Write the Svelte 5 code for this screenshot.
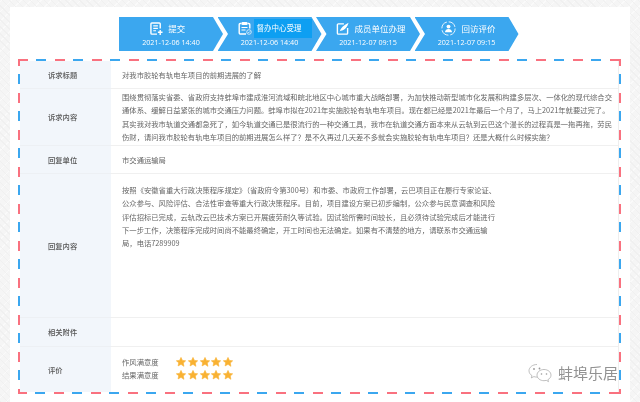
<script>
  const lines1 = [
    "围绕贯彻落实省委、省政府支持蚌埠市建成淮河流域和皖北地区中心城市重大战略部署，为加快推动新型城市化发展和构建多层次、一体化的现代综合交",
    "通体系、缓解日益紧张的城市交通压力问题。蚌埠市拟在2021年实施胶轮有轨电车项目。现在都已经是2021年最后一个月了，马上2021年就要过完了。",
    "其实我对我市轨道交通都急死了，如今轨道交通已是很流行的一种交通工具，我市在轨道交通方面本来从云轨到云巴这个漫长的过程真是一拖再拖，劳民",
    "伤财，请问我市胶轮有轨电车项目的前期进展怎么样了？是不久再过几天差不多就会实施胶轮有轨电车项目？还是大概什么时候实施？",
  ];
  const lines2 = [
    "按照《安徽省重大行政决策程序规定》（省政府令第300号）和市委、市政府工作部署，云巴项目正在履行专家论证、",
    "公众参与、风险评估、合法性审查等重大行政决策程序。目前，项目建设方案已初步编制，公众参与民意调查和风险",
    "评估招标已完成，云轨改云巴技术方案已开展疲劳耐久等试验。因试验所需时间较长，且必须待试验完成后才能进行",
    "下一步工作，决策程序完成时间尚不能最终确定，开工时间也无法确定。如果有不清楚的地方，请联系市交通运输",
    "局，电话7289909",
  ];
  const steps = [
    { title: "提交", date: "2021-12-06 14:40", icon: "doc" },
    { title: "督办中心受理", date: "2021-12-06 14:40", icon: "clip", active: true },
    { title: "成员单位办理", date: "2021-12-07 09:15", icon: "pen" },
    { title: "回访评价", date: "2021-12-07 09:15", icon: "user" },
  ];
  const stars = [0, 1, 2, 3, 4];
</script>

<div class="page">
  <div class="sheet">
    <div class="steps">
      {#each steps as s, i}
        <div class="step" class:first={i === 0}>
          <div class="head {s.icon}">
            <svg class="ico" viewBox="0 0 14 14" fill="none" stroke="#fff">
              {#if s.icon === "doc"}
                <path d="M7.500 13H2a1 1 0 0 1-1-1V2a1 1 0 0 1 1-1h8a1 1 0 0 1 1 1v5" stroke-width="1.500" />
                <path d="M3.500 4.200h5M3.500 6.800h5M3.500 9.400h3" stroke-width="1.300" />
                <path d="M11 8.500v5.500M8.500 11h5" stroke-width="1.500" />
              {:else if s.icon === "clip"}
                <path d="M3.500 2.500H2.200a1 1 0 0 0-1 1V12a1 1 0 0 0 1 1h5.800M9.500 2.500h1.300a1 1 0 0 1 1 1v4" stroke-width="1.400" />
                <rect x="3.500" y="1" width="6" height="3" rx="1" fill="#fff" stroke="none" />
                <path d="M3.500 6.500h6M3.500 9h4" stroke-width="1.200" />
                <circle cx="11" cy="11" r="2.300" stroke-width="0.700" />
                <path d="M9.900 11l.8.8 1.400-1.500" stroke-width="0.700" />
              {:else if s.icon === "pen"}
                <path d="M8.500 2H2.500a1 1 0 0 0-1 1v9a1 1 0 0 0 1 1h9a1 1 0 0 0 1-1V6.500" stroke-width="1.500" />
                <path d="M4 10C5 6.500 8 3.500 13.500 .8 12.500 5.500 9 9 5.200 9.500z" fill="#fff" stroke="none" />
              {:else}
                <circle cx="7" cy="7" r="6.200" stroke-width="0.800" stroke-dasharray="8 1.740" />
                <circle cx="7" cy="5.200" r="1.800" fill="#fff" stroke="none" />
                <path d="M3.600 10.600c.3-2.200 1.700-3.200 3.400-3.200s3.100 1 3.400 3.200z" fill="#fff" stroke="none" />
              {/if}
            </svg>
            <span class="title" class:active={s.active}>{s.title}</span>
          </div>
          <div class="date">{s.date}</div>
        </div>
      {/each}
    </div>

    <div class="frame">
      <div class="table">
        <div class="label">诉求标题</div>
        <div class="val">对我市胶轮有轨电车项目的前期进展的了解</div>

        <div class="label">诉求内容</div>
        <div class="val">
          {#each lines1 as line}<div class="line">{line}</div>{/each}
        </div>

        <div class="label">回复单位</div>
        <div class="val">市交通运输局</div>

        <div class="label">回复内容</div>
        <div class="val top">
          {#each lines2 as line}<div class="line">{line}</div>{/each}
        </div>

        <div class="label">相关附件</div>
        <div class="val"></div>

        <div class="label last">评价</div>
        <div class="val last rates">
          {#each ["作风满意度", "结果满意度"] as name}
            <div class="rate">
              <span class="rate-name">{name}</span>
              <span class="stars">
                {#each stars as n (n)}
                  <svg class="star" viewBox="0 0 24 24"><path d="M12 1l3.400 7.200 7.800 1-5.700 5.400 1.500 7.800L12 17.600l-7 3.800 1.500-7.800L.8 9.200l7.800-1z" fill="#f9b233" stroke="#f9b233" stroke-width="1.500" stroke-linejoin="round" /></svg>
                {/each}
              </span>
            </div>
          {/each}
        </div>
      </div>

      <div class="mark">
        <svg class="wx" viewBox="0 0 24 20" fill="#fff" stroke="#a5a5a5" stroke-width="0.700">
          <path d="M9 1.500C4.600 1.500 1 4.300 1 7.800c0 2 1.200 3.700 3 4.900l-.7 2.200 2.600-1.300c1 .3 2 .5 3.100.5.300 0 .6 0 .9-.1" />
          <path d="M16 6.500c-3.900 0-7 2.500-7 5.600s3.100 5.600 7 5.600c.8 0 1.600-.1 2.300-.3l2.200 1.200-.6-1.900c1.900-1 3.100-2.700 3.100-4.600 0-3.100-3.100-5.600-7-5.600z" />
          <circle cx="6" cy="6" r="0.900" fill="#999" stroke="none" />
          <circle cx="11.500" cy="5.500" r="0.900" fill="#999" stroke="none" />
          <circle cx="13.500" cy="11" r="0.800" fill="#999" stroke="none" />
          <circle cx="18.500" cy="11" r="0.800" fill="#999" stroke="none" />
        </svg>
        <span>蚌埠乐居</span>
      </div>
    </div>
  </div>
</div>

<style>
  :global(body) {
    margin: 0;
    background: #f5f5f5;
  }

  .page {
    width: 640px;
    height: 402px;
    overflow: hidden;
    font-family: "Noto Sans CJK SC", "Noto Sans", sans-serif;
    background-color: #f5f5f5;
    background-image:
      repeating-linear-gradient(45deg, #f0f0f0 0 1px, transparent 1px 5px),
      repeating-linear-gradient(-45deg, #fafafa 0 1px, transparent 1px 7px);
    padding: 7px 10px 0;
    box-sizing: border-box;
    filter: blur(0.3px);
  }

  .sheet {
    background: #fff;
    height: 395px;
    padding-top: 10px;
    box-sizing: border-box;
  }

  .steps {
    display: flex;
    margin-left: 109px;
    height: 34px;
  }

  .step {
    width: 104px;
    flex-shrink: 0;
    margin-right: -5.500px;
    background: #3ba7ef;
    color: #fff;
    display: flex;
    flex-direction: column;
    align-items: center;
    clip-path: polygon(0 0, 94px 0, 104px 50%, 94px 100%, 0 100%, 10.500px 50%);
  }

  .step.first {
    clip-path: polygon(0 0, 94px 0, 104px 50%, 94px 100%, 0 100%);
  }

  .head {
    display: flex;
    align-items: center;
    gap: 5px;
    height: 22px;
  }

  .head.doc {
    margin-right: 7px;
    gap: 5.500px;
  }

  .head.clip {
    margin-left: 10px;
    gap: 2px;
  }

  .head.pen {
    margin-left: 6px;
  }

  .head.user {
    margin-left: 4px;
  }

  .ico {
    width: 13px;
    height: 13px;
    flex-shrink: 0;
  }

  .clip .ico {
    width: 14px;
    height: 14px;
  }

  .user .ico {
    width: 15px;
    height: 15px;
  }

  .title {
    font-size: 8.500px;
    line-height: 14px;
  }

  .title.active {
    font-size: 7.500px;
    background: #0d9ff2;
    padding: 2.500px 10px 2.500px 3px;
  }

  .date {
    font-size: 7.200px;
    line-height: 9px;
    margin-top: -1px;
    font-family: "Open Sans", "Noto Sans", sans-serif;
  }

  .frame {
    position: relative;
    margin: 8px 9px 0 8px;
    padding: 2px 3px 2px 2px;
    height: 335px;
    box-sizing: border-box;
    --dash: #f9717f 0 10px, transparent 10px 18.500px, #3ba7ef 18.500px 28.500px, transparent 28.500px 37px;
    background-image:
      linear-gradient(90deg, var(--dash)),
      linear-gradient(90deg, var(--dash)),
      linear-gradient(180deg, var(--dash)),
      linear-gradient(180deg, var(--dash));
    background-size: 37px 2px, 37px 2px, 2px 37px, 2px 37px;
    background-position: 0 0, -1px 100%, 0 -3px, 100% -3px;
    background-repeat: repeat-x, repeat-x, repeat-y, repeat-y;
  }

  .table {
    display: grid;
    grid-template-columns: 91px 1fr;
    grid-template-rows: 28px 57px 28px 144px 29px 45px;
    height: 100%;
    box-shadow: 1px 0 0 #eee;
  }

  .label {
    display: flex;
    align-items: center;
    padding-left: 28px;
    background: #f2f6fb;
    color: #555;
    font-size: 7.300px;
    font-weight: 500;
    border-bottom: 1px solid #edf0f4;
  }

  .val {
    display: flex;
    flex-direction: column;
    justify-content: center;
    padding: 1px 0 0 11px;
    color: #666;
    font-size: 7.320px;
    border-bottom: 1px solid #f0f0f0;
    min-width: 0;
  }

  .val.top {
    justify-content: flex-start;
    padding-top: 10px;
  }

  .last {
    border-bottom: 0;
  }

  .rates {
    padding: 0 0 2px 11px;
  }

  .line {
    line-height: 13.300px;
    white-space: nowrap;
  }

  .rate {
    display: flex;
    align-items: center;
    height: 13px;
  }

  .rate-name {
    width: 54px;
  }

  .stars {
    display: flex;
    gap: 1.800px;
    margin-top: -1px;
  }

  .star {
    width: 10px;
    height: 10px;
    display: block;
  }

  .mark {
    position: absolute;
    right: 3px;
    bottom: 11px;
    display: flex;
    align-items: center;
    gap: 6px;
    color: #929292;
    font-size: 15px;
    line-height: 18px;
    white-space: nowrap;
  }

  .wx {
    width: 24px;
    height: 20px;
  }
</style>
